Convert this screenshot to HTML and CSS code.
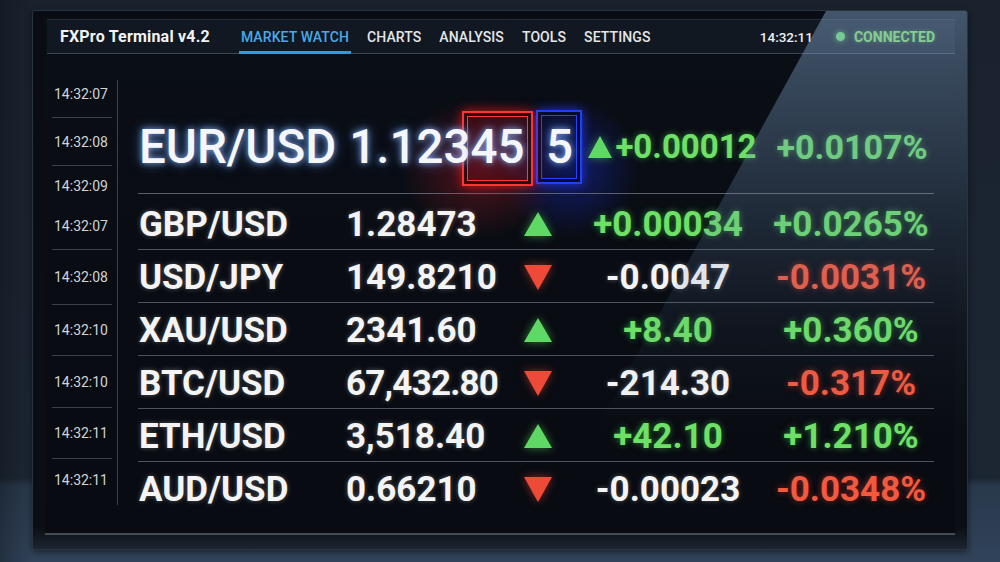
FILE: index.html
```html
<!DOCTYPE html>
<html lang="en">
<head>
<meta charset="utf-8">
<title>FXPro Terminal v4.2</title>
<link rel="stylesheet" href="styles.css">
</head>
<body>
<div class="scene">
  <div class="monitor">
    <div class="screen">
      <header class="topbar">
        <div class="brand">FXPro Terminal v4.2</div>
        <nav class="nav">
          <span class="tab active">MARKET WATCH</span>
          <span class="tab">CHARTS</span>
          <span class="tab">ANALYSIS</span>
          <span class="tab">TOOLS</span>
          <span class="tab">SETTINGS</span>
        </nav>
        <div class="status">
          <span class="clock">14:32:11</span>
          <span class="dot"></span>
          <span class="conn">CONNECTED</span>
        </div>
      </header>
      <main class="board">
        <aside class="log">
          <div class="stamp sep first">14:32:07</div>
          <div class="stamp sep s2">14:32:08</div>
          <div class="stamp s3">14:32:09</div>
          <div class="stamp sep s4">14:32:07</div>
          <div class="stamp sep s5">14:32:08</div>
          <div class="stamp sep s6">14:32:10</div>
          <div class="stamp sep s7">14:32:10</div>
          <div class="stamp sep s8">14:32:11</div>
          <div class="stamp s9">14:32:11</div>
        </aside>
        <section class="quotes">
          <div class="hero">
            <span class="hero-pair">EUR/USD</span>
            <span class="hero-price">1.123<span class="mark">45</span></span>
            <span class="blue-box">5</span>
            <svg class="tri hero-tri" viewBox="0 0 24 22" width="24" height="22"><polygon points="12,0 24,22 0,22" fill="#5fd866"/></svg>
            <span class="hero-chg up">+0.00012</span>
            <span class="hero-pct up">+0.0107%</span>
          </div>
          <div class="row first-row">
            <span class="pair">GBP/USD</span><span class="price">1.28473</span>
            <span class="dir"><svg class="tri" viewBox="0 0 28 24" width="28" height="24"><polygon points="14,0 28,24 0,24" fill="#5fd866"/></svg></span>
            <span class="chg up">+0.00034</span><span class="pct up">+0.0265%</span>
          </div>
          <div class="row">
            <span class="pair">USD/JPY</span><span class="price">149.8210</span>
            <span class="dir"><svg class="tri dn" viewBox="0 0 28 25" width="28" height="25"><polygon points="0,0 28,0 14,25" fill="#ee4a38"/></svg></span>
            <span class="chg">-0.0047</span><span class="pct down">-0.0031%</span>
          </div>
          <div class="row">
            <span class="pair">XAU/USD</span><span class="price">2341.60</span>
            <span class="dir"><svg class="tri" viewBox="0 0 28 24" width="28" height="24"><polygon points="14,0 28,24 0,24" fill="#5fd866"/></svg></span>
            <span class="chg up">+8.40</span><span class="pct up">+0.360%</span>
          </div>
          <div class="row">
            <span class="pair">BTC/USD</span><span class="price tight">67,432.80</span>
            <span class="dir"><svg class="tri dn" viewBox="0 0 28 25" width="28" height="25"><polygon points="0,0 28,0 14,25" fill="#ee4a38"/></svg></span>
            <span class="chg">-214.30</span><span class="pct down">-0.317%</span>
          </div>
          <div class="row">
            <span class="pair">ETH/USD</span><span class="price">3,518.40</span>
            <span class="dir"><svg class="tri" viewBox="0 0 28 24" width="28" height="24"><polygon points="14,0 28,24 0,24" fill="#5fd866"/></svg></span>
            <span class="chg up">+42.10</span><span class="pct up">+1.210%</span>
          </div>
          <div class="row last-row">
            <span class="pair">AUD/USD</span><span class="price">0.66210</span>
            <span class="dir"><svg class="tri dn" viewBox="0 0 28 25" width="28" height="25"><polygon points="0,0 28,0 14,25" fill="#ee4a38"/></svg></span>
            <span class="chg">-0.00023</span><span class="pct down">-0.0348%</span>
          </div>
        </section>
      </main>
    </div>
    <div class="glare"></div>
  </div>
</div>
</body>
</html>
```

FILE: styles.css
```css
* { box-sizing: border-box; }

html, body {
  margin: 0;
  padding: 0;
}

body {
  width: 1000px;
  height: 562px;
  overflow: hidden;
  font-family: Roboto, "Liberation Sans", Arial, sans-serif;
  background:
    linear-gradient(90deg, rgba(10, 14, 20, 0.35) 0, rgba(10, 14, 20, 0) 32px),
    linear-gradient(180deg, #1a222e 0, #1c2633 478px, #29394c 486px, #31435a 562px);
}

.scene {
  width: 1000px;
  height: 562px;
  padding: 10px 0 0 32px;
}

.monitor {
  position: relative;
  width: 936px;
  height: 540px;
  padding: 7px 12px 14px 12px;
  border: 1px solid #2a3441;
  border-radius: 3px;
  background: linear-gradient(180deg, #090d13 0, #0b0f15 96%, #1c2530 100%);
  overflow: hidden;
  box-shadow: 0 2px 6px rgba(0, 0, 0, 0.5);
}

.screen {
  height: 100%;
  display: flex;
  flex-direction: column;
  border-bottom: 2px solid #464c55;
  background:
    radial-gradient(ellipse 80px 70px at 435px 150px, rgba(210, 30, 40, 0.38), rgba(210, 30, 40, 0) 100%),
    radial-gradient(ellipse 70px 70px at 525px 150px, rgba(30, 50, 230, 0.42), rgba(30, 50, 230, 0) 100%),
    linear-gradient(180deg, #0a0e15 0, #080b11 100%);
}

/* ---------- top bar ---------- */
.topbar {
  margin: 1px 0 0 2px;
  height: 35px;
  display: flex;
  align-items: center;
  padding: 0 20px 0 13px;
  background: #111821;
  border-top: 1px solid #222c38;
  border-bottom: 1px solid #3a4555;
  color: #e6e8ea;
}

.brand {
  font-size: 16px;
  font-weight: 700;
  color: #f2f3f5;
  letter-spacing: 0.2px;
}

.nav {
  display: flex;
  align-self: stretch;
  gap: 14px;
  margin-left: 29px;
}

.tab {
  display: flex;
  align-items: center;
  padding: 3px 2px 0;
  font-size: 14px;
  font-weight: 500;
  letter-spacing: 0.1px;
  color: #e4e6e8;
  border-bottom: 3px solid transparent;
  margin-bottom: -1px;
}

.tab.active {
  color: #4aa9e6;
  border-bottom-color: #2f9ae0;
}

.status {
  margin-left: auto;
  display: flex;
  align-items: center;
}

.clock {
  font-size: 13.5px;
  font-weight: 500;
  color: #eceef0;
}

.dot {
  width: 9px;
  height: 9px;
  border-radius: 50%;
  background: #6ee36a;
  box-shadow: 0 0 6px rgba(110, 230, 100, 0.8);
  margin: 0 9px 0 23px;
}

.conn {
  font-size: 14px;
  font-weight: 700;
  color: #86e864;
  text-shadow: 0 0 4px rgba(120, 230, 90, 0.45);
}

/* ---------- board ---------- */
.board {
  display: flex;
  align-items: flex-start;
}

.log {
  width: 73px;
  margin-top: 26px;
  padding-left: 7px;
  border-right: 1px solid #3a414c;
  display: flex;
  flex-direction: column;
}

.stamp {
  width: 60px;
  display: flex;
  align-items: center;
  padding-left: 2px;
  font-size: 14px;
  color: #d2d3d5;
}

.stamp.sep { border-bottom: 1px solid #39404a; }
.stamp.first { height: 38px; padding-bottom: 9px; }
.stamp.s2 { height: 48px; }
.stamp.s3 { height: 42px; padding-bottom: 2px; }
.stamp.s4 { height: 42px; padding-bottom: 6px; }
.stamp.s5 { height: 55px; }
.stamp.s6 { height: 51px; }
.stamp.s7 { height: 52px; }
.stamp.s8 { height: 51px; }
.stamp.s9 { height: 46px; padding-bottom: 4px; }

.quotes {
  margin: 46px 0 0 20px;
  width: 796px;
}

/* hero row */
.hero {
  height: 94px;
  display: flex;
  align-items: center;
  border-bottom: 1px solid #5a616c;
  padding-left: 1px;
}

.hero-pair,
.hero-price,
.blue-box {
  font-size: 47.5px;
  font-weight: 500;
  color: #f4f6fa;
  text-shadow: 0 0 6px rgba(140, 185, 255, 0.9), 0 0 14px rgba(90, 140, 230, 0.6);
}

.hero-price {
  margin-left: 13px;
  position: relative;
  z-index: 0;
}

.mark {
  position: relative;
}

.mark::before {
  content: "";
  position: absolute;
  z-index: -1;
  top: -8px;
  bottom: -11px;
  left: -8px;
  right: -9px;
  border: 2px solid #ff3434;
  background: rgba(90, 14, 24, 0.45);
  box-shadow: 0 0 10px rgba(255, 30, 30, 0.75), inset 0 0 0 3px rgba(20, 8, 12, 0.9), inset 0 0 0 4px #ff3a3a;
}

.blue-box {
  margin-left: 12px;
  height: 74px;
  width: 46px;
  display: flex;
  align-items: center;
  justify-content: center;
  border: 2px solid #2040ff;
  background: rgba(10, 16, 60, 0.6);
  box-shadow: 0 0 10px rgba(40, 60, 255, 0.8), inset 0 0 0 3px #070b28, inset 0 0 0 4px #2446ff;
}

.hero-tri {
  margin-left: 6px;
  filter: drop-shadow(0 0 4px rgba(90, 220, 90, 0.6));
}

.hero-chg {
  margin-left: 3px;
  font-size: 33px;
  font-weight: 700;
}

.hero-pct {
  margin-left: 20px;
  font-size: 34px;
  font-weight: 700;
}

/* regular rows */
.row {
  height: 53px;
  display: grid;
  grid-template-columns: 208px 162px 60px 200px 166px;
  align-items: center;
  border-bottom: 1px solid #4c535e;
  font-size: 35px;
  font-weight: 700;
  color: #f4f4f4;
  padding-top: 2px;
}

.row.first-row { height: 56px; padding-top: 5px; }
.row.last-row { border-bottom: none; }

.pair {
  padding-left: 1px;
  text-shadow: 0 0 5px rgba(255, 255, 255, 0.3);
}

.price {
  text-shadow: 0 0 5px rgba(255, 255, 255, 0.3);
}

.price.tight { letter-spacing: -0.8px; }

.dir {
  display: flex;
  justify-content: center;
}

.tri { display: block; filter: drop-shadow(0 0 4px rgba(90, 220, 90, 0.55)); }
.tri.dn { filter: drop-shadow(0 0 4px rgba(240, 70, 50, 0.55)); }

.chg, .pct {
  text-align: center;
  text-shadow: 0 0 5px rgba(255, 255, 255, 0.3);
}

.up {
  color: #6fe067;
  text-shadow: 0 0 6px rgba(80, 220, 80, 0.55);
}

.down {
  color: #f2593f;
  text-shadow: 0 0 6px rgba(240, 70, 50, 0.55);
}

/* reflection on the glass */
.glare {
  position: absolute;
  inset: 0;
  pointer-events: none;
  clip-path: polygon(793px 0, 936px 0, 936px 540px, 496px 540px);
  background: linear-gradient(180deg,
    rgba(135, 170, 210, 0.46) 0,
    rgba(120, 155, 195, 0.34) 110px,
    rgba(105, 140, 180, 0.2) 220px,
    rgba(95, 125, 165, 0.08) 320px,
    rgba(90, 120, 160, 0) 420px);
}
```
